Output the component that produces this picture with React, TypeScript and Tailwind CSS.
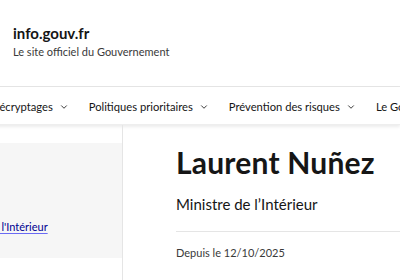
import React from 'react';
import { ChevronDown } from 'lucide-react';

const navItems = ['Décryptages', 'Politiques prioritaires', 'Prévention des risques', 'Le Gouvernement'];

export default function App() {
  return (
    <div className="w-[400px] h-[280px] overflow-hidden bg-white text-[#161616] font-['Lato','Liberation_Sans',sans-serif]">
      {/* header */}
      <header className="h-[87px] px-[13px] pt-[23px] border-b border-[#e5e5e5]">
        <div className="text-[15px] font-bold leading-[20px]">info.gouv.fr</div>
        <p className="mt-[2px] text-[11px] leading-[14px] text-[#3a3a3a]">Le site officiel du Gouvernement</p>
      </header>

      {/* nav */}
      <nav className="h-[38px] pt-[3px] flex items-center gap-[20px] -ml-[9px] whitespace-nowrap shadow-[0_2px_3px_rgba(0,0,0,0.08)] border-b border-[#eeeeee]">
        {navItems.map((item) => (
          <div key={item} className="flex items-center gap-[6px] text-[11.2px] text-[#161616] shrink-0">
            <span>{item}</span>
            <ChevronDown className="w-[10px] h-[10px]" strokeWidth={2} />
          </div>
        ))}
      </nav>

      {/* body */}
      <div className="flex h-[155px]">
        <aside className="w-[123px] shrink-0 pt-[18px] border-r border-[#e5e5e5] overflow-hidden">
          <div className="h-[115px] bg-[#f6f6f6] flex items-end pb-[23px] whitespace-nowrap">
            <a href="#" className="text-[11px] text-[#000091] underline underline-offset-2 decoration-[#6a6af4] -ml-[56px]">
              Ministre de l'Intérieur
            </a>
          </div>
        </aside>
        <main className="flex-1 pl-[53px] pt-[20px]">
          <h1 className="text-[30px] font-bold leading-[34px] tracking-[0.2px]">Laurent Nuñez</h1>
          <p className="mt-[15px] text-[15px] leading-[20px]">Ministre de l’Intérieur</p>
          <div className="mt-[17px] border-t border-[#e5e5e5]" />
          <p className="mt-[14px] text-[11px] leading-[14px] text-[#3a3a3a]">Depuis le 12/10/2025</p>
        </main>
      </div>
    </div>
  );
}
